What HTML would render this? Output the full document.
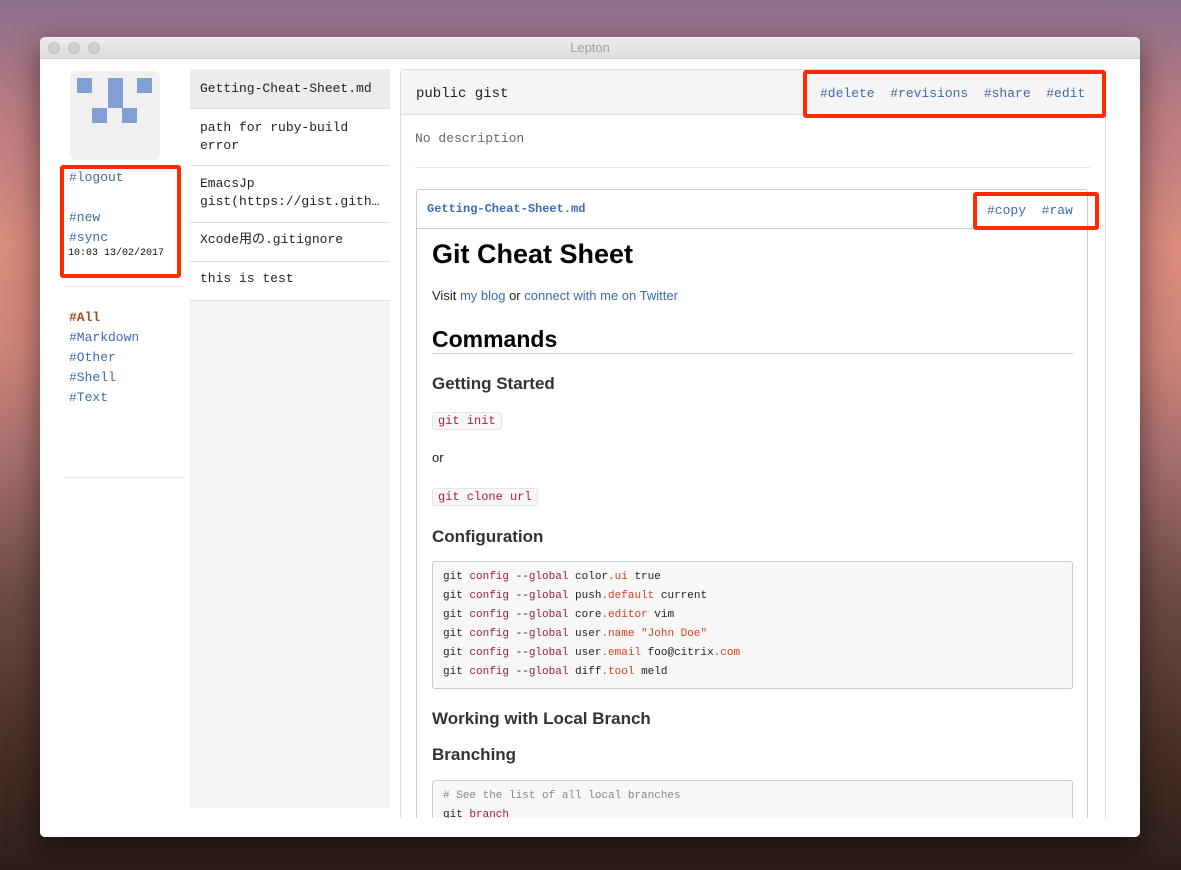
<!DOCTYPE html>
<html><head><meta charset="utf-8"><style>
*{margin:0;padding:0;box-sizing:border-box}
body{width:1181px;height:870px;overflow:hidden;position:relative;font-family:"Liberation Sans",sans-serif;
background:linear-gradient(180deg,#8c6f8c 0%,#b87a82 12%,#d98b7c 28%,#d08478 40%,#a8706e 52%,#6e4c44 68%,#4a3028 85%,#2e1e1a 100%)}
.a{position:absolute}
.m{font-family:"Liberation Mono","Noto Sans CJK JP",monospace}
.win{left:40px;top:37px;width:1100px;height:800px;background:#fff;border-radius:5px;overflow:hidden;box-shadow:0 10px 30px rgba(0,0,0,.5)}
.tb{left:0;top:0;width:1100px;height:22px;background:linear-gradient(#ececec,#dedede);border-bottom:1px solid #ccc;text-align:center;font-size:13px;color:#a0a0a0;line-height:22px}
.dot{width:12px;height:12px;border-radius:50%;background:#d0d0d0;border:1px solid #c0c0c0;top:5px}
.lnk{color:#3d6ab0}
.red{border:4px solid #ff2a00;border-radius:3px}
.li{left:150px;width:200px;border-bottom:1px solid #ddd;font-size:13px;color:#222;padding:8px 10px;line-height:18px}
code{font-family:"Liberation Mono",monospace;font-size:12px;color:#b0203a;background:#f7f7f7;border:1px solid #e5e5e5;border-radius:3px;padding:1px 5px}
.pre{left:32px;width:641px;background:#f7f7f7;border:1px solid #ccc;border-radius:3px;font-family:"Liberation Mono",monospace;font-size:11px;line-height:19px;padding:6px 10px;color:#222}
.k{color:#9a1d4a}.o{color:#d2441a}
h{display:block;position:absolute;color:#333;font-weight:bold}
</style></head><body>
<div class="a win">
 <div class="a tb">Lepton</div>
 <div class="a dot" style="left:8px"></div><div class="a dot" style="left:28px"></div><div class="a dot" style="left:48px"></div>
 <div class="a" style="left:30px;top:34px;width:90px;height:89px;background:#f0f0f0;border-radius:6px"></div>
 <div class="a" style="left:37px;top:41px;width:15px;height:15px;background:#829fd3"></div>
 <div class="a" style="left:68px;top:41px;width:15px;height:30px;background:#829fd3"></div>
 <div class="a" style="left:97px;top:41px;width:15px;height:15px;background:#829fd3"></div>
 <div class="a" style="left:52px;top:71px;width:15px;height:15px;background:#829fd3"></div>
 <div class="a" style="left:82px;top:71px;width:15px;height:15px;background:#829fd3"></div>
 <div class="a m" style="left:29px;top:131px;font-size:13px;line-height:20px"><span class="lnk">#logout</span><br><br><span class="lnk">#new</span><br><span class="lnk">#sync</span></div>
 <div class="a m" style="left:28px;top:211px;font-size:10px;color:#111">10:03 13/02/2017</div>
 <div class="a red" style="left:20px;top:128px;width:121px;height:113px"></div>
 <div class="a" style="left:24px;top:249px;width:121px;height:1px;background:#e5e5e5"></div>
 <div class="a m" style="left:29px;top:271px;font-size:13px;line-height:20px"><b style="color:#a0501a">#All</b><br><span class="lnk">#Markdown</span><br><span class="lnk">#Other</span><br><span class="lnk">#Shell</span><br><span class="lnk">#Text</span></div>
 <div class="a" style="left:24px;top:440px;width:121px;height:1px;background:#e5e5e5"></div>
 <div class="a" style="left:150px;top:32px;width:200px;height:739px;background:#f4f4f4"></div>
 <div class="a li m" style="top:32px;height:40px;background:#ececec;padding-top:11px">Getting-Cheat-Sheet.md</div>
 <div class="a li m" style="top:72px;height:57px;background:#fff;padding-top:10px">path for ruby-build<br>error</div>
 <div class="a li m" style="top:129px;height:57px;background:#fff;padding-top:9px;white-space:nowrap;overflow:hidden">EmacsJp<br>gist(https://gist.gith…</div>
 <div class="a li m" style="top:186px;height:39px;background:#fff">Xcode用の.gitignore</div>
 <div class="a li m" style="top:225px;height:39px;background:#fff">this is test</div>
 <div class="a" style="left:360px;top:32px;width:706px;height:760px;border:1px solid #ddd;border-radius:3px"></div>
 <div class="a" style="left:361px;top:33px;width:704px;height:45px;background:#f5f5f5;border-bottom:1px solid #ddd"></div>
 <div class="a m" style="left:376px;top:49px;font-size:14px;color:#222">public gist</div>
 <div class="a m lnk" style="left:780px;top:49px;font-size:13px">#delete&nbsp; #revisions&nbsp; #share&nbsp; #edit</div>
 <div class="a red" style="left:763px;top:33px;width:303px;height:48px"></div>
 <div class="a m" style="left:375px;top:94px;font-size:13px;color:#666">No description</div>
 <div class="a" style="left:375px;top:130px;width:675px;height:1px;background:#e5e5e5"></div>
 <div class="a" style="left:376px;top:152px;width:672px;height:660px;border:1px solid #ccc;border-radius:3px"></div>
 <div class="a" style="left:377px;top:191px;width:670px;height:1px;background:#ccc"></div>
 <div class="a m lnk" style="left:387px;top:165px;font-size:12px;font-weight:bold">Getting-Cheat-Sheet.md</div>
 <div class="a m lnk" style="left:947px;top:166px;font-size:13px">#copy&nbsp; #raw</div>
 <div class="a red" style="left:933px;top:155px;width:126px;height:38px"></div>
 <div class="a" style="left:392px;top:202px;font-size:27px;font-weight:bold;color:#000">Git Cheat Sheet</div>
 <div class="a" style="left:392px;top:251px;font-size:13px;color:#222">Visit <span class="lnk">my blog</span> or <span class="lnk">connect with me on Twitter</span></div>
 <div class="a" style="left:392px;top:289px;font-size:23px;font-weight:bold;color:#000">Commands</div>
 <div class="a" style="left:392px;top:316px;width:641px;height:1px;background:#ccc"></div>
 <h style="left:392px;top:337px;font-size:17px">Getting Started</h>
 <div class="a" style="left:392px;top:374px"><code>git init</code></div>
 <div class="a" style="left:392px;top:413px;font-size:13px;color:#222">or</div>
 <div class="a" style="left:392px;top:450px"><code>git clone url</code></div>
 <h style="left:392px;top:490px;font-size:17px">Configuration</h>
 <div class="a pre" style="left:392px;top:524px;height:128px">
git <span class="k">config</span> --<span class="k">global</span> color<span class="o">.ui</span> true<br>
git <span class="k">config</span> --<span class="k">global</span> push<span class="o">.default</span> current<br>
git <span class="k">config</span> --<span class="k">global</span> core<span class="o">.editor</span> vim<br>
git <span class="k">config</span> --<span class="k">global</span> user<span class="o">.name</span> <span class="o">"John Doe"</span><br>
git <span class="k">config</span> --<span class="k">global</span> user<span class="o">.email</span> foo@citrix<span class="o">.com</span><br>
git <span class="k">config</span> --<span class="k">global</span> diff<span class="o">.tool</span> meld</div>
 <h style="left:392px;top:672px;font-size:17px">Working with Local Branch</h>
 <h style="left:392px;top:708px;font-size:17px">Branching</h>
 <div class="a pre" style="left:392px;top:743px;height:60px"><span style="color:#888"># See the list of all local branches</span><br>git <span class="k">branch</span></div>
 <div class="a" style="left:0;top:781px;width:1100px;height:19px;background:#fff"></div>
</div>
</body></html>
